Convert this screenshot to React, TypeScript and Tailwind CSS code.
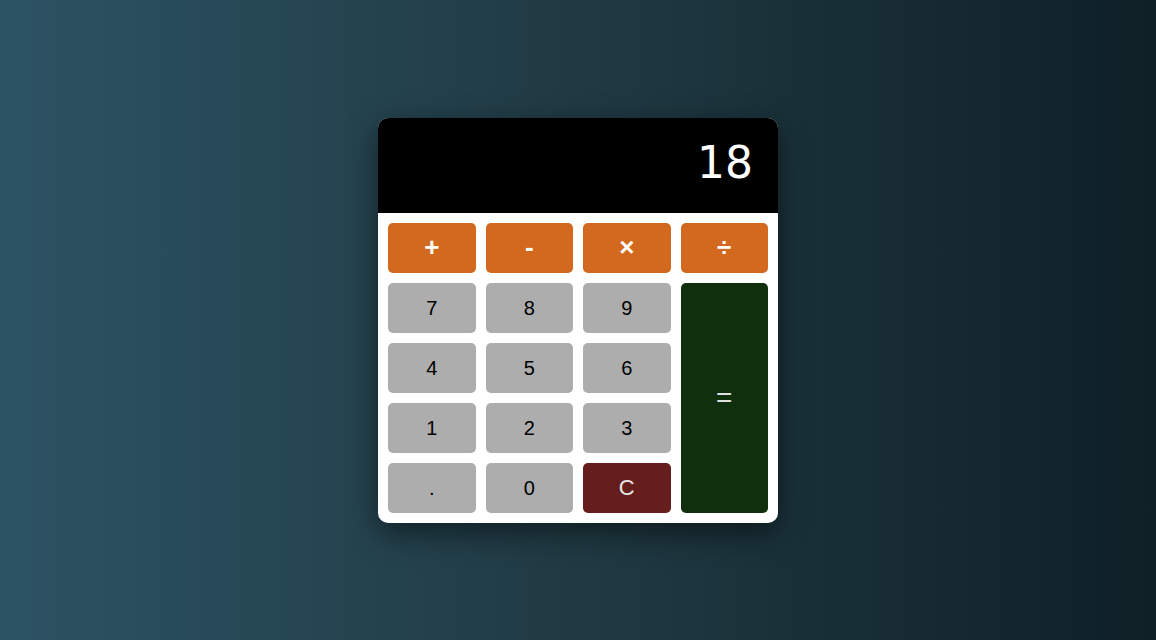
const ops = ['+', '-', '×', '÷'];

const digitRows = [
  ['7', '8', '9'],
  ['4', '5', '6'],
  ['1', '2', '3'],
];

export default function App() {
  return (
    <div className="min-h-screen flex items-center justify-center bg-gradient-to-r from-[#2c5364] via-[#203a43] to-[#0f2027] font-['Liberation_Sans',Arial,sans-serif]">
      <div className="w-[400px] bg-white rounded-[10px] overflow-hidden shadow-[0_10px_30px_rgba(0,0,0,0.5)]">
        <div className="bg-black text-white text-right pt-[22px] pb-[27px] pr-[25px] pl-5 text-[44px] leading-[46px] font-['DejaVu_Sans',sans-serif]">
          18
        </div>
        <div className="grid grid-cols-4 gap-[10px] p-[10px] auto-rows-[50px]">
          {ops.map((op) => (
            <button
              key={op}
              className="bg-[#d2691e] text-white font-bold text-[26px] rounded-[5px]"
            >
              {op}
            </button>
          ))}
          {digitRows[0].map((d) => (
            <button key={d} className="bg-[#adadad] text-black text-[20px] rounded-[5px]">
              {d}
            </button>
          ))}
          <button className="row-span-4 bg-[#0f2f0d] text-[#e0e0e0] text-[28px] rounded-[5px]">
            =
          </button>
          {digitRows.slice(1).flat().map((d) => (
            <button key={d} className="bg-[#adadad] text-black text-[20px] rounded-[5px]">
              {d}
            </button>
          ))}
          <button className="bg-[#adadad] text-black text-[20px] rounded-[5px]">.</button>
          <button className="bg-[#adadad] text-black text-[20px] rounded-[5px]">0</button>
          <button className="bg-[#661d1d] text-[#e8e8e8] text-[22px] rounded-[5px]">C</button>
        </div>
      </div>
    </div>
  );
}
